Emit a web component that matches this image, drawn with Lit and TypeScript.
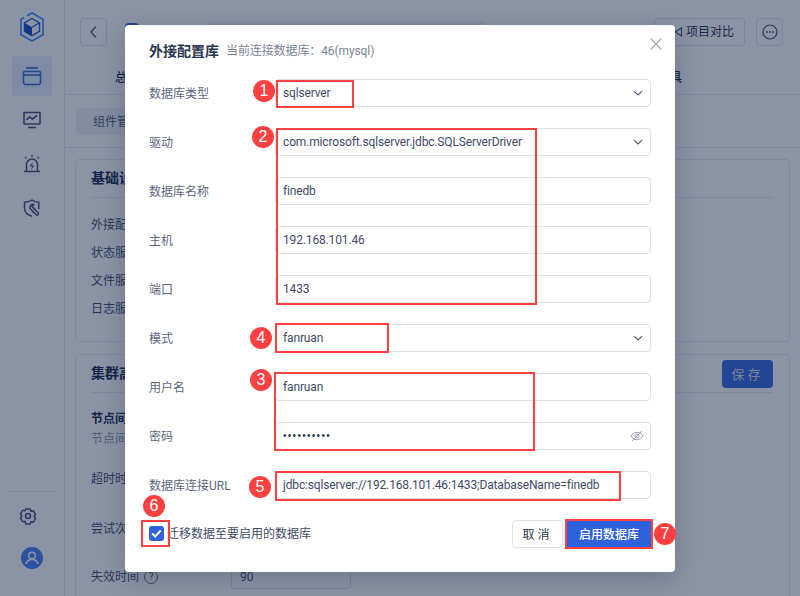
import { LitElement, html, css, svg } from "lit";
import { customElement } from "lit/decorators.js";

const chevron = svg`<svg class="chev" width="12" height="12" viewBox="0 0 12 12" fill="none" stroke="#4b5672" stroke-width="1.1"><path d="M2 4.2 6 8l4-3.800"/></svg>`;

const rows: { label: string; value: string; select?: boolean; pwd?: boolean }[] = [
  { label: "数据库类型", value: "sqlserver", select: true },
  { label: "驱动", value: "com.microsoft.sqlserver.jdbc.SQLServerDriver", select: true },
  { label: "数据库名称", value: "finedb" },
  { label: "主机", value: "192.168.101.46" },
  { label: "端口", value: "1433" },
  { label: "模式", value: "fanruan", select: true },
  { label: "用户名", value: "fanruan" },
  { label: "密码", value: "••••••••••", pwd: true },
  { label: "数据库连接URL", value: "jdbc:sqlserver://192.168.101.46:1433;DatabaseName=finedb" },
];

const boxes = [
  [276, 80, 78, 28],
  [276, 128, 261, 177],
  [275, 323, 114, 30],
  [274, 372, 261, 79],
  [275, 471, 346, 30],
  [141, 520, 29, 27],
  [565, 519, 88, 30],
];
const badges: [string, number, number][] = [
  ["1", 264, 91],
  ["2", 263, 137],
  ["3", 261, 380],
  ["4", 261, 338],
  ["5", 260, 487],
  ["6", 154, 506],
  ["7", 665, 534],
];

@customElement("app-root")
export class AppRoot extends LitElement {
  static styles = css`
    :host {
      display: block;
      position: relative;
      width: 800px;
      height: 596px;
      overflow: hidden;
      background: #fff;
      color: #1f2d4d;
      font: 12px/18px Roboto, "Noto Sans CJK SC", sans-serif;
    }
    .page { display: flex; height: 596px; }
    .side {
      width: 65px;
      box-sizing: border-box;
      flex: none;
      display: flex;
      flex-direction: column;
      align-items: center;
      padding-top: 12px;
      border-right: 1px solid #e2e6ee;
    }
    .logo { height: 44px; }
    .nav {
      width: 40px;
      height: 40px;
      margin-bottom: 4px;
      border-radius: 4px;
      display: flex;
      align-items: center;
      justify-content: center;
      color: #3c4a70;
    }
    .nav.on { background: #e4edff; color: #2e62dc; }
    .grow { flex: 1; }
    .rule { width: 48px; height: 1px; background: #e2e6ee; margin-bottom: 14px; }
    .gear { margin-bottom: 21px; margin-right: 8px; height: 20px; }
    .avatar { height: 22px; margin-bottom: 27px; }
    .main { flex: 1; min-width: 0; }
    .head {
      height: 64px;
      box-sizing: border-box;
      padding: 18px 17px 0 15px;
      display: flex;
      align-items: flex-start;
    }
    .iconbtn {
      width: 27px;
      height: 28px;
      border: 1px solid #d9dee8;
      border-radius: 4px;
      box-sizing: border-box;
      display: flex;
      align-items: center;
      justify-content: center;
    }
    .brand { width: 14px; height: 20px; margin: 5px 0 0 18px; background: #2e62dc; border-radius: 4px; }
    .crumb { width: 277px; height: 20px; margin: 4px 0 0 69px; background: #f1f3f7; border-radius: 3px; }
    .compare {
      margin-left: auto;
      width: 91px;
      height: 28px;
      box-sizing: border-box;
      border: 1px solid #d9dee8;
      border-radius: 4px;
      display: flex;
      align-items: center;
      justify-content: flex-end;
      padding-right: 10px;
      gap: 3px;
    }
    .more { margin-left: 11px; }
    .tabs {
      height: 31px;
      box-sizing: border-box;
      display: flex;
      justify-content: space-between;
      padding: 5px 118px 0 50px;
      border-bottom: 1px solid #e2e6ee;
      font-weight: 500;
      color: #15213f;
    }
    .tools { height: 53px; box-sizing: border-box; padding: 13px 11px; border-bottom: 1px solid #e2e6ee; }
    .tool {
      display: inline-block;
      height: 27px;
      line-height: 28px;
      padding: 0 17px;
      border-radius: 4px;
      background: #eef0f4;
      color: #4d5872;
    }
    .cards { padding: 11px 10px 0 10px; display: flex; flex-direction: column; gap: 12px; }
    .card { border: 1px solid #e2e6ee; border-radius: 4px; padding: 0 16px 0 15px; }
    .card.a { height: 181px; }
    .card.b { height: 260px; }
    .ctitle {
      height: 37px;
      line-height: 36px;
      font-size: 14px;
      font-weight: 700;
      color: #12204a;
      border-bottom: 1px solid #e2e6ee;
      display: flex;
      justify-content: space-between;
    }
    .list { padding-top: 18px; display: flex; flex-direction: column; gap: 10px; color: #3c4763; }
    .save {
      align-self: flex-start;
      margin-top: 5px;
      width: 51px;
      height: 28px;
      border-radius: 4px;
      background: #2e62dc;
      color: #d5dcea;
      font: 400 13px/28px "Noto Sans CJK SC", sans-serif;
      letter-spacing: 3px;
      text-align: center;
    }
    .items { padding-top: 17px; color: #3c4763; }
    .strong { font-weight: 700; color: #12204a; }
    .muted { color: #8891a3; margin-top: 2px; }
    .gap1 { margin-top: 22px; }
    .gap2 { margin-top: 32px; }
    .gap3 { margin-top: 27px; display: flex; align-items: center; height: 24px; }
    .help {
      width: 12px; height: 12px; border: 1px solid #5d6880; border-radius: 50%;
      font-size: 10px; line-height: 12px; text-align: center; margin: 0 0 0 5px;
    }
    .num {
      margin-left: 73px;
      width: 120px;
      height: 24px;
      border: 1px solid #d9dee8;
      border-radius: 3px;
      box-sizing: border-box;
      padding-left: 8px;
      line-height: 22px;
    }

    .mask {
      position: absolute;
      inset: 0;
      background: rgba(23, 41, 75, 0.5);
      display: flex;
      align-items: center;
      justify-content: center;
    }
    .modal {
      position: relative;
      width: 550px;
      box-sizing: border-box;
      height: 547px;
      background: #fff;
      border-radius: 4px;
      padding: 16px 24px 24px;
      box-shadow: 0 6px 24px rgba(20, 30, 50, 0.25);
      display: flex;
      flex-direction: column;
    }
    .mhead { height: 20px; margin-bottom: 18px; display: flex; align-items: center; gap: 7px; }
    .mtitle { font-size: 14px; font-weight: 700; color: #2c3650; line-height: 20px; }
    .msub { color: #7b8397; letter-spacing: -0.1px; }
    .close { position: absolute; top: 13px; right: 13px; display: block; }
    .form { display: flex; flex-direction: column; gap: 21px; }
    .row { display: flex; align-items: center; height: 28px; }
    .label { width: 126px; flex: none; color: #5c667c; padding-top: 2px; }
    .field {
      flex: 1;
      height: 28px;
      box-sizing: border-box;
      border: 1px solid #dfe1ea;
      border-radius: 4px;
      padding: 1px 6px 0 7px;
      display: flex;
      align-items: center;
      justify-content: space-between;
      color: #3f4b66;
      letter-spacing: -0.15px;
      white-space: nowrap;
    }
    .dots { letter-spacing: 1.3px; color: #2c3a58; font-family: "Liberation Sans", sans-serif; font-size: 10px; }
    .foot { margin-top: auto; display: flex; align-items: center; height: 28px; }
    .check {
      width: 15px;
      height: 15px;
      border-radius: 3px;
      background: #2e62dc;
      display: flex;
      align-items: center;
      justify-content: center;
      margin-right: 3px;
    }
    .ctext { color: #3f4b66; flex: 1; padding-top: 1px; }
    .btn {
      height: 28px;
      box-sizing: border-box;
      border-radius: 4px;
      font: 12px/26px "Noto Sans CJK SC", sans-serif;
      text-align: center;
    }
    .cancel { width: 51px; border: 1px solid #dfe1ea; color: #2c3650; letter-spacing: 3px; margin-right: 3px; }
    .ok { width: 86px; background: #2e62dc; color: #fff; line-height: 28px; font-weight: 500; margin-right: -1px; }

    .marks { position: absolute; inset: 0; pointer-events: none; }
    .box { position: absolute; box-sizing: border-box; border: 2px solid #ff4040; }
    .badge {
      position: absolute;
      width: 22px;
      height: 22px;
      margin: -11px 0 0 -11px;
      border-radius: 50%;
      background: #ff4040;
      color: #fff;
      font: 16px/22px "Liberation Sans", sans-serif;
      text-align: center;
    }
  `;

  render() {
    return html`
      <div class="page">
        <aside class="side">
          <div class="logo">
            <svg width="26" height="30" viewBox="0 0 26 30" fill="none">
              <path d="M8 3.700 13 1l11 6.300v15.400L13 29 2 22.700V7.300l3-1.700" stroke="#3f86ff" stroke-width="1.700"/>
              <path d="M13 6.500 20.500 10.800v8.600L13 23.700l-7.500-4.300v-8.600z" fill="#fff" stroke="#1753cf" stroke-width="1.400"/>
              <path d="M5.500 10.800 13 15.200v8.500l-7.500-4.300z" fill="#0b3fc0"/>
              <path d="M13 15.200 20.500 10.800" stroke="#1753cf" stroke-width="1.300"/>
            </svg>
          </div>
          <div class="nav on">
            <svg width="22" height="20" viewBox="0 0 22 20" fill="none" stroke="currentColor" stroke-width="1.600"><path d="M5 2h12"/><path d="M2.500 5.500h17"/><path d="M2.500 5.500v11a2 2 0 0 0 2 2h13a2 2 0 0 0 2-2v-11"/><path d="M2.500 9h17"/></svg>
          </div>
          <div class="nav">
            <svg width="18" height="18" viewBox="0 0 18 18" fill="none" stroke="currentColor" stroke-width="1.600"><rect x="1" y="1.500" width="16" height="11.500" rx=".5"/><path d="m3.500 9 3-3 3 2 4.500-3.500"/><path d="M5 16.500h8"/></svg>
          </div>
          <div class="nav">
            <svg width="20" height="20" viewBox="0 0 20 20" fill="none" stroke="currentColor" stroke-width="1.500"><path d="M4.500 17V10.500a5.500 5.500 0 0 1 11 0V17"/><path d="M2 17.500h16"/><path d="M10 1v1.800M3 3l1.400 1.400M17 3l-1.400 1.400"/><path d="M11 8 7.800 12.300h2.400L9 16l3.200-4.500H9.800z" fill="currentColor" stroke="none"/></svg>
          </div>
          <div class="nav">
            <svg width="18" height="18" viewBox="0 0 18 18" fill="none" stroke="currentColor" stroke-width="1.500"><path d="M15.800 10V3.300C13.500 3.300 11 2.500 9 1 7 2.500 4.500 3.300 1.500 3.300v6c0 3.700 3 6.700 7.500 7.900"/><path d="M10.700 5.500a3 3 0 0 0-3.800 3.800l6.200 6.400a1.300 1.300 0 0 0 2-1.900L9 7.500l1.700-2zM12.500 10a3 3 0 0 1-2.200-.4" /></svg>
          </div>
          <div class="grow"></div>
          <div class="rule"></div>
          <div class="gear">
            <svg width="20" height="20" viewBox="0 0 20 20" fill="none" stroke="#3c4a70" stroke-width="1.500"><path d="M7.800 2h4.400l.8 2.300 2.400-.5 2.200 3.800-1.600 1.900 1.600 1.900-2.200 3.800-2.400-.5-.8 2.300H7.800L7 14.200l-2.400.5-2.200-3.800L4 9 2.400 7.100l2.200-3.800 2.400.5z" transform="translate(0 1)" stroke-linejoin="round"/><circle cx="10" cy="10" r="2.500"/></svg>
          </div>
          <div class="avatar">
            <svg width="22" height="22" viewBox="0 0 22 22"><circle cx="11" cy="11" r="11" fill="#3f78f5"/><circle cx="11" cy="8.500" r="3.300" fill="none" stroke="#fff" stroke-width="1.500"/><path d="M4.800 17c1-3 3.400-4.500 6.200-4.500s5.200 1.500 6.200 4.500" fill="none" stroke="#fff" stroke-width="1.500"/></svg>
          </div>
        </aside>
        <main class="main">
          <div class="head">
            <div class="iconbtn">
              <svg width="10" height="14" viewBox="0 0 10 14" fill="none" stroke="#3c4a70" stroke-width="1.300"><path d="M7 1.500 2 7l5 5.500"/></svg>
            </div>
            <div class="brand"></div>
            <div class="crumb"></div>
            <div class="compare">
              <svg width="10" height="10" viewBox="0 0 10 10" fill="none" stroke="#3c4a70" stroke-width="1.200"><path d="M8.500 1 2 5l6.500 4z"/></svg>
              <span>项目对比</span>
            </div>
            <div class="iconbtn more">
              <svg width="16" height="16" viewBox="0 0 16 16" fill="#3c4a70"><circle cx="8" cy="8" r="7" fill="none" stroke="#3c4a70" stroke-width="1.200"/><circle cx="5" cy="8" r=".9"/><circle cx="8" cy="8" r=".9"/><circle cx="11" cy="8" r=".9"/></svg>
            </div>
          </div>
          <div class="tabs"><span>总览</span><span>工具</span></div>
          <div class="tools"><span class="tool">组件管理</span></div>
          <div class="cards">
            <section class="card a">
              <div class="ctitle">基础设置</div>
              <div class="list">
                <div>外接配置库</div><div>状态服务器</div><div>文件服务器</div><div>日志服务器</div>
              </div>
            </section>
            <section class="card b">
              <div class="ctitle"><span>集群高级设置</span><span class="save">保存</span></div>
              <div class="items">
                <div class="strong">节点间通信</div>
                <div class="muted">节点间通</div>
                <div class="gap1">超时时间</div>
                <div class="gap2">尝试次数</div>
                <div class="gap3">失效时间<span class="help">?</span><span class="num">90</span></div>
              </div>
            </section>
          </div>
        </main>
      </div>
      <div class="mask">
        <div class="modal">
          <div class="mhead">
            <span class="mtitle">外接配置库</span>
            <span class="msub">当前连接数据库：46(mysql)</span>
          </div>
          <svg class="close" width="12" height="12" viewBox="0 0 12 12" stroke="#9aa1af" stroke-width="1.100"><path d="m.7.7 10.600 10.600M11.300.7.7 11.300"/></svg>
          <div class="form">
            ${rows.map(
              (r) => html`<div class="row">
                <span class="label">${r.label}</span>
                <div class="field">
                  <span class=${r.pwd ? "dots" : ""}>${r.value}</span>
                  ${r.select ? chevron : ""}
                  ${r.pwd
                    ? svg`<svg width="14" height="14" viewBox="0 0 14 14" fill="none" stroke="#9aa1af" stroke-width="1"><path d="M1 7c1.500-2.500 3.500-3.700 6-3.700S11.500 4.500 13 7c-1.500 2.500-3.500 3.700-6 3.700S2.500 9.500 1 7z"/><circle cx="7" cy="7" r="2"/><path d="M12 2 2 12"/></svg>`
                    : ""}
                </div>
              </div>`
            )}
          </div>
          <div class="foot">
            <span class="check">
              <svg width="11" height="9" viewBox="0 0 11 9" fill="none" stroke="#fff" stroke-width="2"><path d="m1.200 4.500 3 3 5.500-6"/></svg>
            </span>
            <span class="ctext">迁移数据至要启用的数据库</span>
            <span class="btn cancel">取消</span>
            <span class="btn ok">启用数据库</span>
          </div>
        </div>
      </div>
      <div class="marks">
        ${boxes.map(
          ([x, y, w, h]) =>
            html`<div class="box" style="left:${x}px;top:${y}px;width:${w}px;height:${h}px"></div>`
        )}
        ${badges.map(
          ([t, x, y]) => html`<div class="badge" style="left:${x}px;top:${y}px">${t}</div>`
        )}
      </div>
    `;
  }
}
